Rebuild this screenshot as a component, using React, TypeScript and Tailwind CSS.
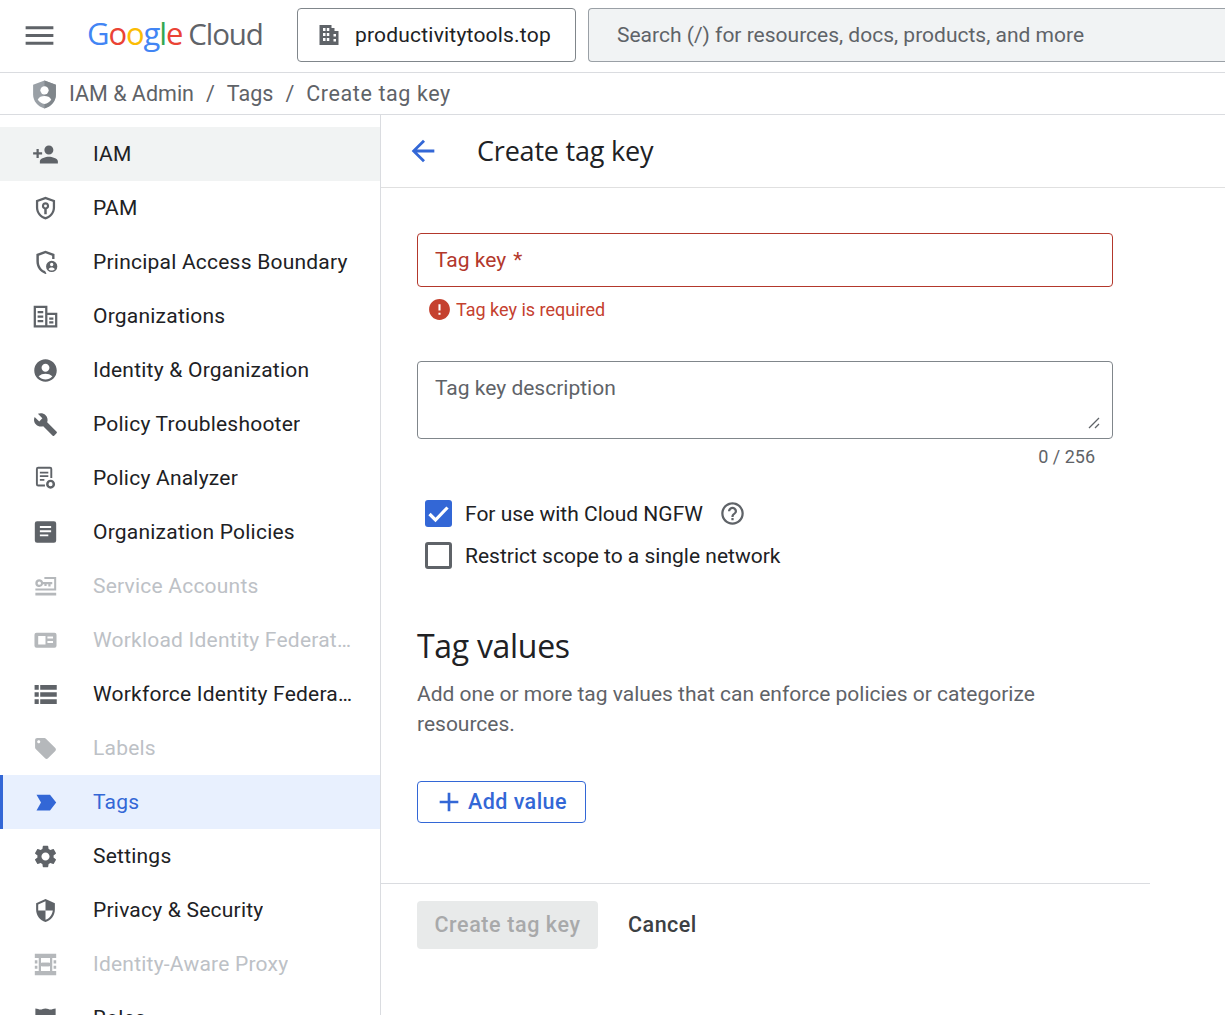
import type { ReactNode } from 'react';
import {
  MdAccountCircle,
  MdAdd,
  MdArrowBack,
  MdBuild,
  MdError,
  MdHelpOutline,
  MdLocalOffer,
  MdMenu,
  MdPersonAdd,
  MdSecurity,
  MdSettings,
} from 'react-icons/md';

const Svg = ({ children, className = '' }: { children: ReactNode; className?: string }) => (
  <svg viewBox="0 0 24 24" fill="currentColor" className={`w-[27px] h-[27px] ${className}`}>
    {children}
  </svg>
);

const PamIcon = () => (
  <Svg>
    <path fillRule="evenodd" d="M12 1.500l8.500 3.200v6.300c0 4.900-3.500 9.300-8.500 10.700-5-1.400-8.500-5.800-8.500-10.700V4.700L12 1.500zm0 2.200L5.500 6.100v4.900c0 3.900 2.700 7.400 6.500 8.600 3.800-1.200 6.500-4.700 6.500-8.600V6.100L12 3.700z" />
    <path fillRule="evenodd" d="M12 6.500a3.200 3.200 0 0 1 1.100 6.200V17h-2.200v-4.300A3.200 3.200 0 0 1 12 6.500zm0 1.900a1.300 1.300 0 1 0 0 2.600 1.300 1.300 0 0 0 0-2.600z" />
  </Svg>
);

const BoundaryIcon = () => (
  <Svg>
    <path d="M12 1.500l8 3v4.300h-2.100V6L12 3.800 6.100 6v5c0 3.900 2.400 7.300 5.500 8.600l1.300 2.300-.9.300c-4.800-1.400-8.100-6-8.100-11.200V4.500l8-3z" />
    <path fillRule="evenodd" d="M17.500 10.500a5 5 0 1 1 0 10 5 5 0 0 1 0-10zm0 1.800a1.500 1.500 0 1 0 0 3 1.500 1.500 0 0 0 0-3zm-2.800 5.600c.6.700 1.700 1.100 2.800 1.100s2.200-.4 2.800-1.100c-.4-.9-1.700-1.400-2.800-1.400s-2.400.5-2.800 1.400z" />
  </Svg>
);

const OrgIcon = () => (
  <Svg>
    <path fillRule="evenodd" d="M1.500 2.500h12.200v6.200h8.800v13h-21V2.500zm2 2v15.200h8.200V4.500H3.500zm10.200 6.200v9h6.800v-9h-6.800z" />
    <path d="M5 7h5v2H5zM5 11h5v2H5zM5 15h5v2H5zM15.300 12.800h3.700v2h-3.700zM15.300 16.300h3.700v2h-3.700z" />
  </Svg>
);

const AnalyzerIcon = () => (
  <Svg>
    <path d="M5.500 1.500h10.500a2 2 0 0 1 2 2v8h-1.700V3.300H5.200v14h6.300V19h-6a2 2 0 0 1-2-2V3.500a2 2 0 0 1 2-2z" />
    <path d="M7 6h7.500v1.500H7zM7 9.200h7.500v1.500H7zM7 12.400h4v1.500H7z" />
    <path fillRule="evenodd" d="M16.500 13a4 4 0 1 1 0 8 4 4 0 0 1 0-8zm0 2.200a1.800 1.800 0 1 0 0 3.600 1.800 1.800 0 0 0 0-3.600z" />
  </Svg>
);

const ArticleIcon = () => (
  <Svg>
    <path fillRule="evenodd" d="M4.500 2h15a2 2 0 0 1 2 2v15a2 2 0 0 1-2 2h-15a2 2 0 0 1-2-2V4a2 2 0 0 1 2-2zM7 6.300V8h10V6.300H7zm0 3.700v1.700h10V10H7zm0 3.700v1.700h7.500v-1.700H7z" />
  </Svg>
);

const ServiceIcon = () => (
  <Svg>
    <path fillRule="evenodd" d="M6.500 5.500a3.500 3.500 0 0 1 3.300 2.500H18v2h-1.500v2h-2v-2h-1.500v1.500h-2V10H9.800a3.500 3.500 0 1 1-3.300-4.500zm0 2a1.500 1.500 0 1 0 0 3 1.500 1.500 0 0 0 0-3z" />
    <path d="M11 3.500h10.500v12H3v-1.800h16.700V5.300H11zM3 17.500h18.500V20H3z" />
  </Svg>
);

const WorkloadIcon = () => (
  <Svg>
    <path fillRule="evenodd" d="M4 5h16a1.800 1.800 0 0 1 1.800 1.800v9.900a1.800 1.800 0 0 1-1.800 1.800H4a1.800 1.800 0 0 1-1.800-1.800V6.800A1.800 1.800 0 0 1 4 5zm1.500 3v7.500h6.500V8H5.500zm8.200.500v1.700h5V8.500h-5zm0 4v1.700h5v-1.700h-5z" />
  </Svg>
);

const WorkforceIcon = () => (
  <Svg>
    <path d="M2.300 3.500h3.700v4.200H2.300zM7.300 3.500h14.700v4.200H7.300zM2.300 9.900h3.700v4.200H2.300zM7.300 9.900h14.700v4.200H7.300zM2.300 16.300h3.700v4.200H2.300zM7.300 16.300h14.700v4.200H7.300z" />
  </Svg>
);

const TagIcon = () => (
  <Svg>
    <path d="M4 5h12l5.500 7-5.500 7H4l4-7-4-7z" />
  </Svg>
);

const ProxyIcon = () => (
  <Svg>
    <path fillRule="evenodd" d="M2.500 2.500h19v3.800h-3.500v11.400h3.500v3.800h-19v-3.800H6V6.300H2.500V2.500zm5.500 3.800v4.200h8V6.300H8zm0 7.200v4.200h8v-4.200H8z" />
    <path d="M2.500 8.300h2.300v2.700H2.500zM19.200 8.300h2.300v2.700h-2.300zM2.500 13h2.300v2.700H2.500zM19.200 13h2.300v2.700h-2.300zM9 10.500h6v3H9z" />
  </Svg>
);

const RolesIcon = () => (
  <Svg>
    <path d="M12 3c2 0 3 1 4.500 1S19 3 21 3v9c0 5-4 9-9 10-5-1-9-5-9-10V3c2 0 3 1 4.500 1S10 3 12 3z" />
  </Svg>
);

const AdminShield = () => (
  <svg viewBox="0 0 24 28" className="w-[25px] h-[29px] shrink-0">
    <path d="M12 .5l11 4v9.500c0 6.500-4.600 11.700-11 13.500C5.600 25.700 1 20.500 1 14V4.500l11-4z" fill="#9aa0a6" />
    <path d="M12 .5l11 4v9.500c0 6.500-4.600 11.700-11 13.500V.5z" fill="#80868b" />
    <circle cx="12" cy="10" r="4" fill="#fff" />
    <path d="M5.500 19c1-2.600 3.800-3.600 6.500-3.600s5.500 1 6.500 3.600c-1.500 2-3.800 3.500-6.500 4.200-2.700-.7-5-2.200-6.500-4.200z" fill="#fff" />
  </svg>
);

const BuildingIcon = () => (
  <svg viewBox="0 0 24 24" fill="currentColor" className="w-[24px] h-[24px] text-[#5f6368]">
    <path fillRule="evenodd" d="M2.500 2h12v3h3v3h4v14h-19V2zM6 5v3h2.500V5H6zm3.800 0v3h2.500V5H9.800zM6 10v3h2.500v-3H6zm3.800 0v3h2.500v-3H9.800zm6.700 1v2.500H19V11h-2.500zM6 15v3h2.500v-3H6zm3.800 0v3h2.500v-3H9.800zm6.700 1v2.500H19V16h-2.500z" />
  </svg>
);

type NavItem = { label: string; icon: ReactNode; state?: 'hover' | 'active' | 'disabled' };

const navItems: NavItem[] = [
  { label: 'IAM', icon: <MdPersonAdd size={29} />, state: 'hover' },
  { label: 'PAM', icon: <PamIcon /> },
  { label: 'Principal Access Boundary', icon: <BoundaryIcon /> },
  { label: 'Organizations', icon: <OrgIcon /> },
  { label: 'Identity & Organization', icon: <MdAccountCircle size={27} /> },
  { label: 'Policy Troubleshooter', icon: <MdBuild size={25} /> },
  { label: 'Policy Analyzer', icon: <AnalyzerIcon /> },
  { label: 'Organization Policies', icon: <ArticleIcon /> },
  { label: 'Service Accounts', icon: <ServiceIcon />, state: 'disabled' },
  { label: 'Workload Identity Federation', icon: <WorkloadIcon />, state: 'disabled' },
  { label: 'Workforce Identity Federation', icon: <WorkforceIcon /> },
  { label: 'Labels', icon: <MdLocalOffer size={25} />, state: 'disabled' },
  { label: 'Tags', icon: <TagIcon />, state: 'active' },
  { label: 'Settings', icon: <MdSettings size={27} /> },
  { label: 'Privacy & Security', icon: <MdSecurity size={25} /> },
  { label: 'Identity-Aware Proxy', icon: <ProxyIcon />, state: 'disabled' },
  { label: 'Roles', icon: <RolesIcon /> },
];

function SideNavRow({ item }: { item: NavItem }) {
  const rowColor =
    item.state === 'active'
      ? 'bg-[#e8f0fe] text-[#3367d6] border-l-[3px] border-[#3367d6]'
      : item.state === 'hover'
        ? 'bg-[#f1f3f3] text-[#202124] border-l-[3px] border-transparent'
        : item.state === 'disabled'
          ? 'text-[#bdc1c6] border-l-[3px] border-transparent'
          : 'text-[#202124] border-l-[3px] border-transparent';
  const iconColor =
    item.state === 'active' ? 'text-[#3367d6]' : item.state === 'disabled' ? 'text-[#b5b8bb]' : 'text-[#5f6368]';

  return (
    <div className={`flex items-center h-[54px] shrink-0 pr-[27px] ${rowColor}`}>
      <span className={`w-[27px] ml-[29px] flex items-center justify-center shrink-0 ${iconColor}`}>{item.icon}</span>
      <span className="ml-[34px] pt-[2px] truncate text-[21px] tracking-[0.22px]">{item.label}</span>
    </div>
  );
}

function Checkbox({ checked, label, children }: { checked?: boolean; label: string; children?: ReactNode }) {
  return (
    <div className="flex items-center h-[27px] ml-[8px]">
      {checked ? (
        <span className="w-[27px] h-[27px] rounded-[3px] bg-[#3367d6] flex items-center justify-center">
          <svg viewBox="0 0 27 27" className="w-[27px] h-[27px]" fill="none" stroke="#fff" strokeWidth="3.200">
            <path d="M4.500 14 10.500 20 22.500 7.500" />
          </svg>
        </span>
      ) : (
        <span className="w-[27px] h-[27px] rounded-[3px] border-[3px] border-[#5f6368]" />
      )}
      <span className="ml-[13px] pt-[2px] text-[21px] text-[#202124]">{label}</span>
      {children}
    </div>
  );
}

export default function App() {
  return (
    <div className="w-[1225px] h-[1015px] overflow-hidden bg-white flex flex-col font-['Roboto',sans-serif]">
      {/* Top bar */}
      <header className="h-[73px] shrink-0 flex items-center border-b border-[#dadce0] pb-[2px]">
        <MdMenu size={37} className="ml-[21px] text-[#5f6368] shrink-0" />
        <div className="ml-[29px] w-[180px] pb-[3px] shrink-0 flex items-baseline font-['Open_Sans',sans-serif] font-medium text-[31px] tracking-[-1.1px]">
          <span className="text-[#4285f4]">G</span>
          <span className="text-[#ea4335]">o</span>
          <span className="text-[#fbbc04]">o</span>
          <span className="text-[#4285f4]">g</span>
          <span className="text-[#34a853]">l</span>
          <span className="text-[#ea4335]">e</span>
          <span className="ml-[6px] text-[#5f6368] font-normal text-[29.500px]">Cloud</span>
        </div>
        <div className="ml-[30px] w-[279px] h-[54px] shrink-0 rounded-[4px] border border-[#80868b] flex items-center pl-[19px]">
          <BuildingIcon />
          <span className="ml-[14px] pt-[2px] text-[21px] text-[#202124] tracking-[0.2px]">productivitytools.top</span>
        </div>
        <div className="ml-[12px] flex-1 h-[54px] rounded-l-[4px] border border-r-0 border-[#9aa0a6] bg-[#f1f3f4] flex items-center pl-[28px]">
          <span className="pt-[2px] text-[21px] text-[#5f6368]">Search (/) for resources, docs, products, and more</span>
        </div>
      </header>

      {/* Breadcrumb */}
      <div className="h-[42px] shrink-0 flex items-center border-b border-[#dadce0] pl-[32px] pt-[1px] text-[21.500px] text-[#5f6368]">
        <AdminShield />
        <span className="ml-[12px]">IAM &amp; Admin</span>
        <span className="mx-[12px]">/</span>
        <span>Tags</span>
        <span className="mx-[12px]">/</span>
        <span className="tracking-[0.6px]">Create tag key</span>
      </div>

      <div className="flex-1 min-h-0 flex">
        {/* Side nav */}
        <nav className="w-[381px] shrink-0 border-r border-[#dadce0] pt-[12px] flex flex-col overflow-hidden">
          {navItems.map((item) => (
            <SideNavRow key={item.label} item={item} />
          ))}
        </nav>

        {/* Main */}
        <main className="flex-1 min-w-0 flex flex-col">
          <div className="h-[73px] shrink-0 flex items-center border-b border-[#e0e0e0] pl-[26px]">
            <MdArrowBack size={34} className="text-[#3367d6] -ml-[1px]" />
            <h1 className="ml-[37px] font-['Open_Sans',sans-serif] text-[27px] text-[#202124] tracking-[-0.2px]">Create tag key</h1>
          </div>

          <div className="w-[769px] flex flex-col">
            <div className="px-[36px] pt-[45px] flex flex-col">
              <div className="w-[696px] h-[54px] rounded-[4px] border border-[#b3382c] flex items-center pl-[17px] pt-[2px] text-[21px] text-[#b3382c]">
                Tag key <span className="ml-[7px]">*</span>
              </div>
              <div className="h-[46px] flex items-center pl-[10px] pb-[2px] text-[18px] text-[#c5412f]">
                <MdError size={25} className="shrink-0" />
                <span className="ml-[4px]">Tag key is required</span>
              </div>
              <div className="relative mt-[28px] w-[696px] h-[78px] rounded-[4px] border border-[#80868b] pl-[17px] pt-[11px] text-[21px] text-[#5f6368]">
                Tag key description
                <svg viewBox="0 0 12 12" className="absolute right-[12px] bottom-[9px] w-[12px] h-[12px]" stroke="#5f6368" strokeWidth="1.300">
                  <path d="M1 11 11 1M7 11 11 7" />
                </svg>
              </div>
              <div className="w-[696px] h-[36px] flex items-center justify-end pr-[18px] pb-[2px] text-[18px] text-[#5f6368]">0 / 256</div>

              <div className="mt-[25px] flex flex-col gap-[15px]">
                <Checkbox checked label="For use with Cloud NGFW">
                  <MdHelpOutline size={27} className="ml-[16px] text-[#5f6368]" />
                </Checkbox>
                <Checkbox label="Restrict scope to a single network" />
              </div>

              <h2 className="mt-[55px] font-['Open_Sans',sans-serif] text-[32px] leading-[44px] text-[#202124] tracking-[-0.3px]">Tag values</h2>
              <p className="mt-[11px] w-[640px] text-[21px] leading-[30px] text-[#5f6368]">
                Add one or more tag values that can enforce policies or categorize resources.
              </p>
              <button className="mt-[42px] w-[169px] h-[42px] rounded-[4px] border border-[#3367d6] flex items-center pl-[15px] text-[#3367d6]">
                <MdAdd size={32} className="shrink-0" />
                <span className="ml-[3px] text-[21.500px] font-medium tracking-[0.45px]">Add value</span>
              </button>
            </div>

            <div className="mt-[60px] border-t border-[#dadce0] pl-[36px] pt-[17px] flex items-center">
              <button className="w-[181px] h-[48px] rounded-[4px] bg-[#e8eaea] text-[21.500px] font-medium text-[#a8a9aa] tracking-[0.6px]">Create tag key</button>
              <button className="ml-[30px] text-[21.500px] font-medium text-[#3c4043] tracking-[0.5px]">Cancel</button>
            </div>
          </div>
        </main>
      </div>
    </div>
  );
}
